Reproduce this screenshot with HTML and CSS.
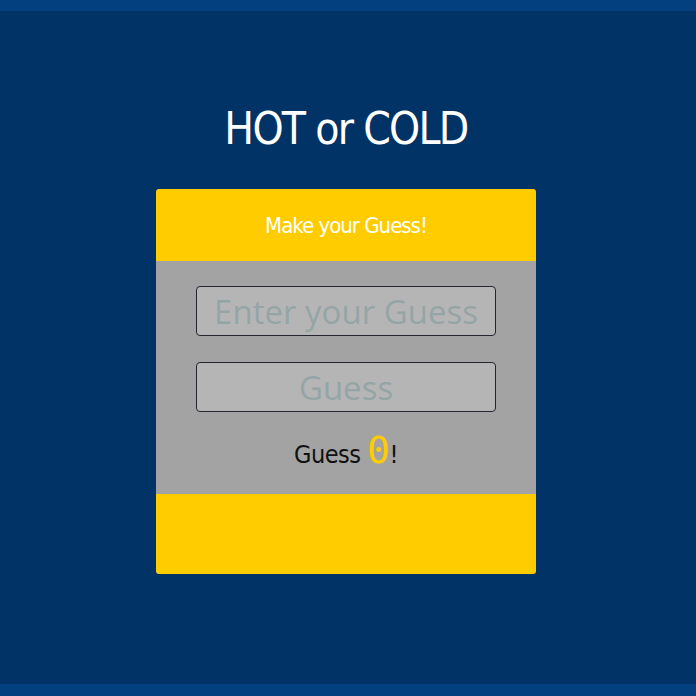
FILE: index.html
```html
<!DOCTYPE html>
<html>
<head>
<meta charset="utf-8">
<link rel="stylesheet" href="styles.css">
</head>
<body>
<div class="page">
  <div class="topbar"></div>
  <main class="main">
    <h1 class="title">HOT or COLD</h1>
    <section class="card">
      <header class="card-head">Make your Guess!</header>
      <div class="card-body">
        <input class="field" type="text" placeholder="Enter your Guess">
        <button class="field btn" type="button">Guess</button>
        <p class="count">Guess <span class="num">0</span>!</p>
      </div>
      <footer class="card-foot"></footer>
    </section>
  </main>
  <div class="botbar"></div>
</div>
</body>
</html>
```
FILE: styles.css
```css
html, body { margin: 0; padding: 0; }
body { background: #023366; font-family: "DejaVu Sans", sans-serif; font-stretch: condensed; }
.page { display: flex; flex-direction: column; height: 696px; }
.topbar { height: 11px; background: #03407f; flex: none; }
.botbar { height: 12px; background: #03407f; flex: none; }
.main { flex: 1; display: flex; flex-direction: column; align-items: center; padding-right: 4px; }
.title { margin: 94px 0 0; height: 84px; color: #fff; font-weight: normal; font-size: 44px; line-height: 48px; letter-spacing: -1.7px; }
.card { width: 380px; border-radius: 3px; overflow: hidden; display: flex; flex-direction: column; }
.card-head { background: #ffcc00; height: 72px; display: flex; align-items: center; justify-content: center; color: #fff; font-size: 22px; letter-spacing: -1px; }
.card-body { background: #a3a3a3; height: 233px; display: flex; flex-direction: column; align-items: center; padding-top: 25px; box-sizing: border-box; }
.field { width: 300px; height: 50px; box-sizing: border-box; border: 1px solid #23262e; border-radius: 4px; background: #b5b5b5; font-family: "Open Sans", sans-serif; font-stretch: normal; font-size: 33px; color: #95a5a6; text-align: center; padding: 0; margin: 0 0 26px; }
.field::placeholder { color: #95a5a6; }
.btn { cursor: pointer; }
.count { margin: -8px 0 0; font-size: 25px; color: #111; line-height: 40px; letter-spacing: -0.5px; }
.num { color: #ffcc00; font-family: "DejaVu Sans Mono", monospace; font-size: 38px; }
.card-foot { background: #ffcc00; height: 80px; }
```
